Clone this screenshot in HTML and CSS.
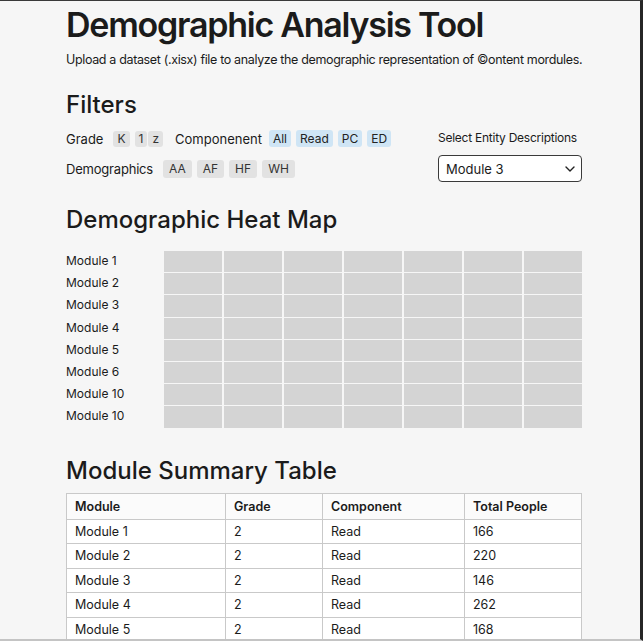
FILE: index.html
```html
<!DOCTYPE html>
<html lang="en">
<head>
<meta charset="utf-8">
<title>Demographic Analysis Tool</title>
<link rel="stylesheet" href="styles.css">
</head>
<body>
<div class="frame">
  <main class="page">
    <h1 class="title">Demographic Analysis Tool</h1>
    <p class="subtitle">Upload a dataset (.xisx) file to analyze the demographic representation of ©ontent mordules.</p>

    <h2 class="section-title filters-title">Filters</h2>
    <div class="filters">
      <div class="filter-rows">
        <div class="filter-row">
          <span class="filter-label">Grade</span>
          <div class="chips">
            <span class="chip">K</span>
            <span class="chip-pair"><span class="chip">1</span><span class="chip">z</span></span>
          </div>
          <span class="filter-label comp-label">Componenent</span>
          <div class="chips">
            <span class="chip chip-blue">All</span>
            <span class="chip chip-blue">Read</span>
            <span class="chip chip-blue">PC</span>
            <span class="chip chip-blue">ED</span>
          </div>
        </div>
        <div class="filter-row">
          <span class="filter-label demo-label">Demographics</span>
          <div class="chips">
            <span class="chip chip-lg">AA</span>
            <span class="chip chip-lg">AF</span>
            <span class="chip chip-lg">HF</span>
            <span class="chip chip-lg">WH</span>
          </div>
        </div>
      </div>
      <div class="entity">
        <span class="entity-label">Select Entity Descriptions</span>
        <div class="select">
          <span>Module 3</span>
          <svg class="chev" width="10" height="6" viewBox="0 0 10 6"><path d="M1 1l4 4 4-4" fill="none" stroke="#222" stroke-width="1.4" stroke-linecap="round" stroke-linejoin="round"/></svg>
        </div>
      </div>
    </div>

    <h2 class="section-title heat-title">Demographic Heat Map</h2>
    <div class="heatmap">
      <div class="hm-label">Module 1</div><div class="cell"></div><div class="cell"></div><div class="cell"></div><div class="cell"></div><div class="cell"></div><div class="cell"></div><div class="cell"></div>
      <div class="hm-label">Module 2</div><div class="cell"></div><div class="cell"></div><div class="cell"></div><div class="cell"></div><div class="cell"></div><div class="cell"></div><div class="cell"></div>
      <div class="hm-label">Module 3</div><div class="cell"></div><div class="cell"></div><div class="cell"></div><div class="cell"></div><div class="cell"></div><div class="cell"></div><div class="cell"></div>
      <div class="hm-label">Module 4</div><div class="cell"></div><div class="cell"></div><div class="cell"></div><div class="cell"></div><div class="cell"></div><div class="cell"></div><div class="cell"></div>
      <div class="hm-label">Module 5</div><div class="cell"></div><div class="cell"></div><div class="cell"></div><div class="cell"></div><div class="cell"></div><div class="cell"></div><div class="cell"></div>
      <div class="hm-label">Module 6</div><div class="cell"></div><div class="cell"></div><div class="cell"></div><div class="cell"></div><div class="cell"></div><div class="cell"></div><div class="cell"></div>
      <div class="hm-label">Module 10</div><div class="cell"></div><div class="cell"></div><div class="cell"></div><div class="cell"></div><div class="cell"></div><div class="cell"></div><div class="cell"></div>
      <div class="hm-label">Module 10</div><div class="cell"></div><div class="cell"></div><div class="cell"></div><div class="cell"></div><div class="cell"></div><div class="cell"></div><div class="cell"></div>
    </div>

    <h2 class="section-title table-title">Module Summary Table</h2>
    <table class="summary">
      <thead>
        <tr><th class="c1">Module</th><th class="c2">Grade</th><th class="c3">Component</th><th>Total People</th></tr>
      </thead>
      <tbody>
        <tr><td>Module 1</td><td>2</td><td>Read</td><td>166</td></tr>
        <tr><td>Module 2</td><td>2</td><td>Read</td><td>220</td></tr>
        <tr><td>Module 3</td><td>2</td><td>Read</td><td>146</td></tr>
        <tr><td>Module 4</td><td>2</td><td>Read</td><td>262</td></tr>
        <tr><td>Module 5</td><td>2</td><td>Read</td><td>168</td></tr>
        <tr><td>Module 6</td><td>2</td><td>Read</td><td>190</td></tr>
      </tbody>
    </table>
  </main>
</div>
</body>
</html>
```

FILE: styles.css
```css
* { box-sizing: border-box; }
html, body { margin: 0; padding: 0; }
body {
  background: #f6f6f6;
  font-family: Inter, "Noto Sans", sans-serif;
  color: #1b1b1b;
}
.frame {
  height: 641px;
  overflow: hidden;
  border-top: 1px solid #3a3a3a;
  border-right: 3px solid #262626;
  border-bottom: 2px solid #c4c4c4;
}
.page {
  width: 516px;
  margin-left: 66px;
}
.title {
  margin: 4px 0 0;
  font-size: 34px;
  font-weight: 600;
  line-height: 40px;
  letter-spacing: -1.25px;
}
.subtitle {
  margin: 6px 0 0;
  font-size: 12.5px;
  line-height: 18px;
  letter-spacing: -0.35px;
  white-space: nowrap;
}
.section-title {
  margin: 0;
  font-size: 24px;
  font-weight: 500;
  line-height: 30px;
}
.filters-title { margin-top: 21px; }
.filters {
  display: flex;
  justify-content: space-between;
  margin-top: 10px;
}
.filter-rows { display: flex; flex-direction: column; gap: 13px; }
.filter-row { display: flex; align-items: center; font-size: 13px; }
.filter-label { margin-right: 10px; }
.demo-label { letter-spacing: -0.2px; margin-right: 10px; }
.comp-label { margin-left: 12px; margin-right: 7px; }
.chips { display: flex; gap: 5px; }
.chip-pair { display: flex; gap: 1px; }
.chip {
  background: #e2e2e2;
  border-radius: 3px;
  font-size: 12px;
  line-height: 16px;
  padding: 0 4px;
  color: #333;
}
.chip-blue { background: #cfe5f5; color: #222; line-height: 17px; }
.chip-lg { line-height: 18px; padding: 0 6px; }
.entity { width: 144px; display: flex; flex-direction: column; gap: 9px; }
.entity-label { font-size: 12px; line-height: 16px; letter-spacing: -0.25px; white-space: nowrap; }
.select {
  height: 27px;
  border: 1px solid #3a3a3a;
  border-radius: 4px;
  background: #fff;
  display: flex;
  align-items: center;
  justify-content: space-between;
  padding: 0 6px 0 7px;
  font-size: 13px;
}
.heat-title { margin-top: 23px; }
.heatmap {
  margin-top: 16px;
  display: grid;
  grid-template-columns: 96px repeat(7, 1fr);
  grid-auto-rows: 21.2px;
  row-gap: 1px;
  column-gap: 2px;
}
.hm-label { font-size: 12px; display: flex; align-items: center; padding-bottom: 2px; }
.cell { background: #d4d4d4; }
.table-title { margin-top: 28px; }
.summary {
  margin-top: 7px;
  width: 516px;
  border-collapse: collapse;
  background: #fff;
  font-size: 12.5px;
}
.summary th, .summary td {
  border: 1px solid #c9c9c9;
  text-align: left;
  padding: 0 8px;
  height: 24.5px;
}
.summary th { font-weight: 600; height: 26px; background: #fbfbfb; }
.c1 { width: 159px; }
.c2 { width: 97px; }
.c3 { width: 142px; }
```
